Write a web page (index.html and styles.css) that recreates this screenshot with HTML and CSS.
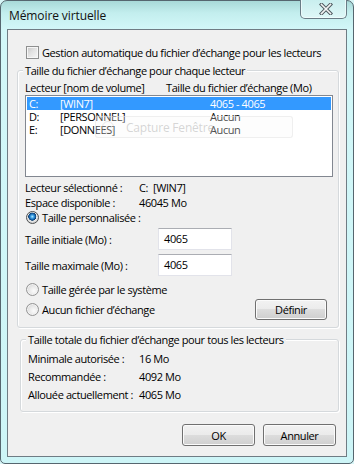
FILE: index.html
```html
<!DOCTYPE html>
<html lang="fr">
<head>
<meta charset="utf-8">
<title>Mémoire virtuelle</title>
<link rel="stylesheet" href="styles.css">
</head>
<body>
<div class="window">
  <div class="titlebar">
    <span class="title">Mémoire virtuelle</span>
    <div class="close">
      <svg width="14" height="12" viewBox="0 0 14 12">
        <path d="M2.5 1.5 L11.5 10.5 M11.5 1.5 L2.5 10.5" stroke="#4f5a60" stroke-width="3.6" stroke-linecap="square" fill="none"/>
        <path d="M2.5 1.5 L11.5 10.5 M11.5 1.5 L2.5 10.5" stroke="#f2f4f4" stroke-width="1.6" stroke-linecap="square" fill="none"/>
      </svg>
    </div>
  </div>
  <div class="client">
    <div class="check-row"><span class="checkbox"></span><span>Gestion automatique du fichier d’échange pour les lecteurs</span></div>

    <div class="group g1">
      <div class="legend">Taille du fichier d’échange pour chaque lecteur</div>
      <div class="cols"><span class="col-a">Lecteur [nom de volume]</span><span>Taille du fichier d’échange (Mo)</span></div>
      <div class="listbox">
        <div class="row selected"><span class="c-drive">C:</span><span class="c-vol">[WIN7]</span><span>4065 - 4065</span></div>
        <div class="row"><span class="c-drive">D:</span><span class="c-vol">[PERSONNEL]</span><span>Aucun</span></div>
        <div class="row"><span class="c-drive">E:</span><span class="c-vol">[DONNEES]</span><span>Aucun</span></div>
        <div class="ghost"><span class="ghost-icon"></span><span>Capture Fenêtre</span></div>
      </div>
      <div class="info">
        <span>Lecteur sélectionné :</span><span>C:&nbsp; [WIN7]</span>
        <span>Espace disponible :</span><span>46045 Mo</span>
      </div>
      <div class="radio-row first"><span class="radio on"></span><span>Taille personnalisée :</span></div>
      <div class="field-row r1"><span class="field-label">Taille initiale (Mo) :</span><span class="input">4065</span></div>
      <div class="field-row r2"><span class="field-label">Taille maximale (Mo) :</span><span class="input">4065</span></div>
      <div class="radio-row sys"><span class="radio"></span><span>Taille gérée par le système</span></div>
      <div class="radio-row last"><span class="radio"></span><span>Aucun fichier d’échange</span><span class="btn btn-def">Définir</span></div>
    </div>

    <div class="group g2">
      <div class="legend">Taille totale du fichier d’échange pour tous les lecteurs</div>
      <div class="totals">
        <span>Minimale autorisée :</span><span>16 Mo</span>
        <span>Recommandée :</span><span>4092 Mo</span>
        <span>Allouée actuellement :</span><span>4065 Mo</span>
      </div>
    </div>

    <div class="buttons">
      <span class="btn">OK</span>
      <span class="btn">Annuler</span>
    </div>
  </div>
</div>
</body>
</html>
```
FILE: styles.css
```css
* { box-sizing: border-box; }
html, body { margin: 0; padding: 0; }
body {
  width: 354px;
  height: 464px;
  overflow: hidden;
  background: #d8f6f7;
  font-family: "Open Sans", "Noto Sans", sans-serif;
  font-size: 11px;
  letter-spacing: -0.4px;
  color: #000;
}
.window {
  width: 354px;
  height: 464px;
  border: 1px solid #56666f;
  border-radius: 7px 7px 5px 5px;
  background: linear-gradient(to bottom, #a8d9d8 0, #c3eeee 12px, #d2f7f8 28px, #cdf5f7 100%);
  padding: 0 6px 6px 6px;
  display: flex;
  flex-direction: column;
}
.titlebar {
  height: 28px;
  display: flex;
  align-items: center;
  padding-left: 8px;
  margin: 0 -6px;
}
.title {
  font-size: 12px;
  letter-spacing: -0.1px;
  color: #111;
  flex: 1;
}
.close {
  align-self: flex-start;
  margin-top: -1px;
  margin-right: 6px;
  width: 47px;
  height: 19px;
  border: 1px solid #6a7c86;
  border-top: none;
  border-radius: 0 0 5px 5px;
  background: linear-gradient(to bottom, #c9eeee, #dff8f8);
  box-shadow: inset 0 -1px 0 #eefcfc, inset 1px 0 0 #eafafa, inset -1px 0 0 #eafafa;
  display: flex;
  align-items: center;
  justify-content: center;
}
.close svg { display: block; margin-left: 4px; }
.client {
  height: 428px;
  background: #f0f0f0;
  border: 1px solid #6f7c84;
}
.check-row {
  margin: 16px 0 0 18px;
  height: 13px;
  display: flex;
  align-items: center;
  gap: 3px;
  line-height: 13px;
}
.checkbox {
  width: 13px;
  height: 13px;
  border: 1px solid #8e8f8f;
  box-shadow: inset 0 0 0 1px #f6f6f6;
  background: linear-gradient(135deg, #c6c6c6 0, #e2e2e2 45%, #f7f7f7 100%);
  flex: none;
}
.group {
  border: 1px solid #d5d9dc;
  border-radius: 3px;
  box-shadow: inset 1px 1px 0 #fff, 1px 1px 0 #fff;
}
.legend {
  width: fit-content;
  margin: -7px 0 0 5px;
  padding: 0 2px;
  line-height: 13px;
  background: #f0f0f0;
}
.g1 {
  margin: 11px 7px 0 9px;
  padding-bottom: 7px;
}
.cols {
  margin-top: 4px;
  padding-left: 7px;
  display: flex;
  line-height: 13px;
}
.col-a { width: 141px; }
.listbox {
  position: relative;
  margin: 1px 0 0 7px;
  width: 308px;
  height: 82px;
  border: 1px solid #828790;
  background: #fff;
  padding: 1px;
}
.row {
  height: 13px;
  line-height: 13px;
  display: flex;
  padding-left: 2px;
}
.row.selected { background: #3399ff; color: #fff; }
.c-drive { width: 31px; }
.c-vol { width: 150px; }
.ghost {
  position: absolute;
  left: 69px;
  top: 20px;
  width: 198px;
  height: 22px;
  border: 1px solid rgba(225, 225, 225, 0.5);
  border-radius: 3px;
  background: rgba(250, 250, 250, 0.3);
  display: flex;
  align-items: center;
  gap: 12px;
  padding-left: 6px;
  color: rgba(150, 150, 150, 0.4);
  font-size: 12px;
  letter-spacing: -0.2px;
}
.ghost-icon {
  width: 12px;
  height: 12px;
  border-radius: 50%;
  border: 1px solid rgba(200, 200, 200, 0.4);
}
.info {
  margin-top: 3px;
  padding-left: 7px;
  display: grid;
  grid-template-columns: 114px auto;
  line-height: 15px;
}
.radio-row {
  display: flex;
  align-items: center;
  gap: 3px;
  padding-left: 8px;
  height: 15px;
  line-height: 15px;
}
.radio {
  width: 13px;
  height: 13px;
  border-radius: 50%;
  border: 1px solid #939393;
  background: radial-gradient(circle at 62% 62%, #fcfcfc 0, #e9e9e9 45%, #c8c8c8 100%);
  box-shadow: inset 0 0 0 1px #f2f2f2;
  flex: none;
}
.radio.on {
  border-color: #4f5152;
  background: radial-gradient(circle at 48% 42%, #b8ecff 0, #3ea2e6 1.6px, #1561a8 3px, #0b3a6a 3.8px, #eeeeee 4.3px, #d4d4d4 6px);
  box-shadow: none;
}
.field-row {
  display: flex;
  align-items: center;
  padding-left: 7px;
  height: 22px;
}
.field-row.r1 { margin-top: 3px; }
.field-row.r2 { margin-top: 4px; }
.field-label { width: 133px; }
.input {
  width: 74px;
  height: 22px;
  background: #fff;
  border: 1px solid #e2e3ea;
  border-top-color: #abadb3;
  padding-left: 5px;
  line-height: 19px;
}
.radio-row.sys { margin-top: 6px; }
.radio-row.last {
  margin-top: 2px;
  height: 21px;
  padding-right: 11px;
}
.btn {
  display: flex;
  align-items: center;
  justify-content: center;
  width: 72px;
  height: 21px;
  border: 1px solid #707070;
  border-radius: 3px;
  box-shadow: inset 0 0 0 1px #fbfbfb;
  background: linear-gradient(to bottom, #f2f2f2 0, #ebebeb 50%, #dddddd 50%, #cfcfcf 100%);
}
.btn-def { margin-left: auto; }
.g2 {
  margin: 11px 7px 0 12px;
  padding-bottom: 7px;
}
.totals {
  margin-top: 4px;
  padding-left: 7px;
  display: grid;
  grid-template-columns: 111px auto;
  line-height: 18px;
}
.buttons {
  margin-top: 12px;
  display: flex;
  justify-content: flex-end;
  gap: 8px;
  padding-right: 10px;
}
.buttons .btn { width: 73px; height: 22px; }
```
